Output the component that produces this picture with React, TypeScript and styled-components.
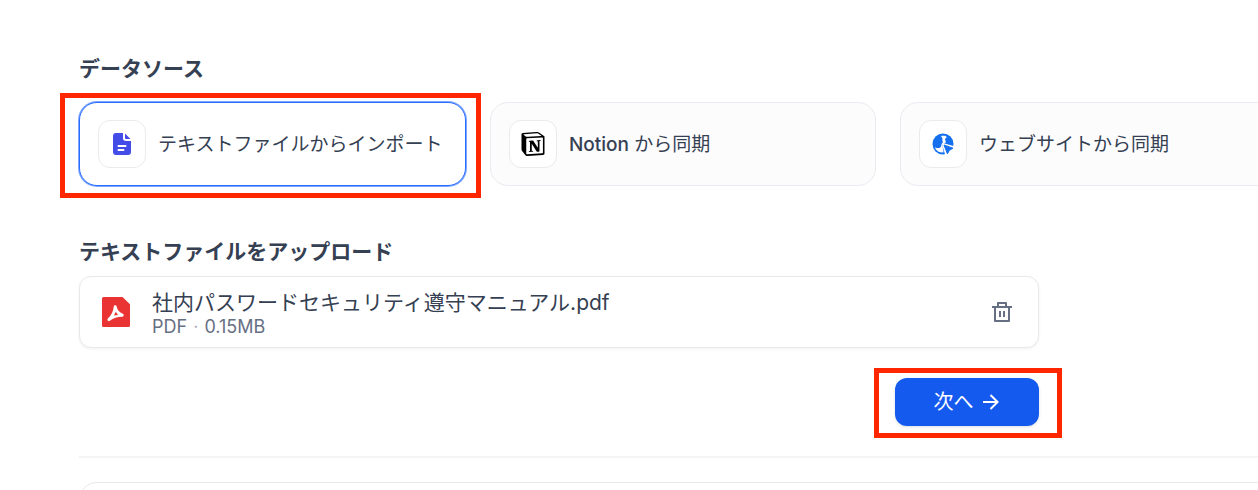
import React, { useState } from "react";
import styled, { createGlobalStyle } from "styled-components";
import { RiArrowRightLine, RiDeleteBinLine } from "react-icons/ri";
import { SiNotion } from "react-icons/si";

const GlobalStyle = createGlobalStyle`
  *, *::before, *::after { box-sizing: border-box; }
  body {
    margin: 0;
    background: #ffffff;
    color: #354052;
    font-family: Inter, "Noto Sans CJK JP", sans-serif;
    overflow-x: hidden;
  }
  button { font-family: inherit; cursor: pointer; }
`;

const Page = styled.main`
  padding: 54px 0 0 79px;
  overflow: hidden;
`;

const Heading = styled.h2<{ $gap: number }>`
  margin: 0 0 ${({ $gap }) => $gap}px;
  font-size: 21px;
  line-height: 30px;
  font-weight: 600;
  white-space: nowrap;
`;

const SourceGrid = styled.div`
  display: grid;
  grid-template-columns: minmax(387px, 1fr) repeat(2, minmax(386px, 1fr));
  gap: 24px;
  margin-bottom: 51px;
`;

const Marked = styled.div`
  position: relative;
  display: grid;
`;

const Mark = styled.span<{ $inset: string }>`
  position: absolute;
  inset: ${({ $inset }) => $inset};
  border: 5px solid #ff2600;
  pointer-events: none;
`;

const SourceCard = styled.button<{ $active: boolean }>`
  display: flex;
  align-items: center;
  gap: 12px;
  height: 84px;
  padding: 0 18px;
  border: 1px solid ${({ $active }) => ($active ? "#296dff" : "#e9ebf0")};
  box-shadow: ${({ $active }) => ($active ? "0 0 0 1px #7ea8ff" : "none")};
  border-radius: 18px;
  background: ${({ $active }) => ($active ? "#ffffff" : "#fcfcfd")};
  color: #354052;
  font-size: 19px;
  line-height: 30px;
  white-space: nowrap;
`;

const IconTile = styled.span`
  display: flex;
  align-items: center;
  justify-content: center;
  flex: none;
  width: 48px;
  height: 48px;
  border: 1px solid #ebebec;
  border-radius: 12px;
  background: #ffffff;
  color: #000000;
`;

const CardLabel = styled.span`
  padding-top: 2px;
`;

const Brand = styled.span`
  font-weight: 500;
`;

const UploadColumn = styled.section`
  max-width: 960px;
`;

const FileRow = styled.div`
  display: flex;
  align-items: center;
  height: 72px;
  padding: 0 24px 0 22px;
  border: 1px solid #e9e9eb;
  border-radius: 12px;
  background: #ffffff;
  box-shadow: 0 1px 3px rgba(16, 24, 40, 0.06);
`;

const FileText = styled.div`
  flex: 1;
  min-width: 0;
  padding-top: 3px;
  margin-left: 22px;
`;

const FileName = styled.div`
  font-size: 21px;
  line-height: 26px;
  white-space: nowrap;
`;

const FileMeta = styled.div`
  color: #676f83;
  font-size: 18px;
  line-height: 22px;
`;

const Dot = styled.span`
  margin: 0 1px;
  color: #a9afbd;
`;

const IconButton = styled.button`
  display: flex;
  padding: 0;
  border: 0;
  background: none;
  color: #676f83;
`;

const Actions = styled.div`
  display: flex;
  justify-content: flex-end;
  margin: 30px 0;
`;

const NextButton = styled.button`
  display: flex;
  align-items: center;
  justify-content: center;
  gap: 5px;
  width: 144px;
  height: 48px;
  padding: 0 0 0 2px;
  border: 0;
  border-radius: 12px;
  background: #155aef;
  color: #ffffff;
  font-size: 20px;
  line-height: 30px;
  font-weight: 400;
  box-shadow: 0 1px 3px rgba(16, 24, 40, 0.15);
`;

const Divider = styled.hr`
  height: 2px;
  margin: 0 0 24px;
  border: 0;
  background: #f4f4f5;
`;

const NextPanel = styled.section`
  height: 60px;
  margin-right: -24px;
  border: 1px solid #e9e9eb;
  border-radius: 18px;
`;

const TextFileIcon = () => (
  <svg width="18" height="22" viewBox="0 0 18 22" aria-hidden="true">
    <path
      fill="#444ce7"
      d="M3 0H10V5.2C10 6.9 11.1 8 12.8 8H18V19A3 3 0 0 1 15 22H3A3 3 0 0 1 0 19V3A3 3 0 0 1 3 0Z"
    />
    <path fill="#444ce7" d="M12 .5 17.5 6H13A1 1 0 0 1 12 5Z" />
    <path stroke="#fff" strokeWidth="2" strokeLinecap="round" d="M5.5 13H12.5M5.5 17H10.5" />
  </svg>
);

const WebIcon = () => (
  <svg width="22" height="22" viewBox="0 0 22 22" aria-hidden="true">
    <circle cx="11" cy="11" r="10.5" fill="#1570ef" />
    <path
      fill="#fff"
      d="M9 3C10.4 2.5 12.3 2.5 13.7 3L14.8 4.2C14 5 13.2 5.4 13 6.4L13.8 8.4L13.4 10L11 10.6L10.4 12.2L11.6 19.3C9 19.8 6.4 19 4.7 17.2C3.9 16.4 3.3 15.4 2.9 14.2C4.6 15.2 6.4 15.2 7.8 14.7C9.4 14 9.2 12.6 9.6 11L11 9L10.2 7.2L10.6 5.7Z"
    />
    <path fill="#fff" d="M11 10 21.5 13V17L17 22H13.2L10.2 12Z" />
    <path
      fill="#1570ef"
      stroke="#1570ef"
      strokeWidth="1"
      strokeLinejoin="round"
      d="M12 12 21 15.2 17.4 17.2 15.4 20.8Z"
    />
  </svg>
);

const PdfIcon = () => (
  <svg width="28" height="30" viewBox="0 0 28 30" aria-hidden="true">
    <path
      fill="#ea3434"
      d="M1.5 0H20.5L28 7.3V28.5A1.5 1.5 0 0 1 26.5 30H1.5A1.5 1.5 0 0 1 0 28.5V1.5A1.5 1.5 0 0 1 1.5 0Z"
    />
    <path
      fill="#fff"
      stroke="#fff"
      strokeWidth="3"
      strokeLinecap="round"
      strokeLinejoin="round"
      d="M13.2 9.8C13.9 13.4 16.2 16.6 20.2 18.2C15.2 18.2 10.6 19.6 6.9 22.6C10.2 19.4 12.8 14.8 13.2 9.8Z"
    />
    <path fill="#ea3434" d="M13.8 14.8 16 17.9 12 18.4Z" />
  </svg>
);

type Source = "file" | "notion" | "web";

export default function App() {
  const [source, setSource] = useState<Source>("file");

  return (
    <>
      <GlobalStyle />
      <Page>
        <Heading $gap={18}>データソース</Heading>
        <SourceGrid>
          <Marked>
            <SourceCard
              type="button"
              $active={source === "file"}
              aria-pressed={source === "file"}
              onClick={() => setSource("file")}
            >
              <IconTile>
                <TextFileIcon />
              </IconTile>
              <CardLabel>テキストファイルからインポート</CardLabel>
            </SourceCard>
            <Mark $inset="-9px -15px -12px -19px" />
          </Marked>
          <SourceCard
            type="button"
            $active={source === "notion"}
            aria-pressed={source === "notion"}
            onClick={() => setSource("notion")}
          >
            <IconTile>
              <SiNotion size={24} aria-hidden="true" />
            </IconTile>
            <CardLabel>
              <Brand>Notion</Brand> から同期
            </CardLabel>
          </SourceCard>
          <SourceCard
            type="button"
            $active={source === "web"}
            aria-pressed={source === "web"}
            onClick={() => setSource("web")}
          >
            <IconTile>
              <WebIcon />
            </IconTile>
            <CardLabel>ウェブサイトから同期</CardLabel>
          </SourceCard>
        </SourceGrid>

        <UploadColumn>
          <Heading $gap={9}>テキストファイルをアップロード</Heading>
          <FileRow>
            <PdfIcon />
            <FileText>
              <FileName>社内パスワードセキュリティ遵守マニュアル.pdf</FileName>
              <FileMeta>
                PDF <Dot>·</Dot> 0.15MB
              </FileMeta>
            </FileText>
            <IconButton type="button" aria-label="削除">
              <RiDeleteBinLine size={24} />
            </IconButton>
          </FileRow>
          <Actions>
            <Marked>
              <NextButton type="button">
                次へ
                <RiArrowRightLine size={24} aria-hidden="true" />
              </NextButton>
              <Mark $inset="-10px -23px -12px -21px" />
            </Marked>
          </Actions>
        </UploadColumn>
        <Divider />
        <NextPanel />
      </Page>
    </>
  );
}
